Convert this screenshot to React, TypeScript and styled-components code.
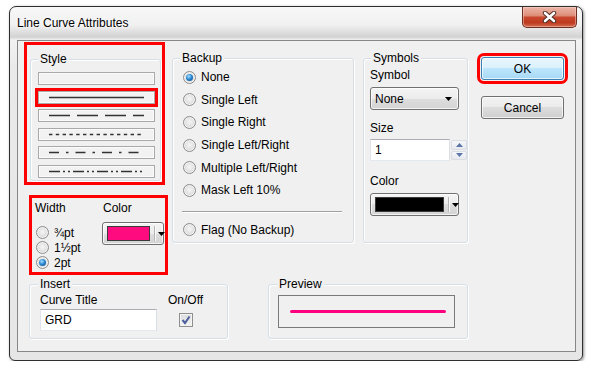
import React from 'react';
import styled, { createGlobalStyle, css } from 'styled-components';

const Global = createGlobalStyle`
  html, body { margin: 0; padding: 0; background: #ffffff; }
  body { font-family: "Liberation Sans", Arial, sans-serif; font-size: 12px; color: #000; }
  * { box-sizing: border-box; }
`;

const FONT = `"Liberation Sans", Arial, sans-serif`;
const MARK = '#ff0000';

const Window = styled.div`
  margin: 6px 0 0 9px;
  width: 574px;
  height: 355px;
  border: 1px solid #2e2e2e;
  border-radius: 7px 7px 6px 6px;
  padding: 0 6px 8px 7px;
  display: flex;
  flex-direction: column;
  background: linear-gradient(180deg, #f8f8f8 0px, #f0f0f0 18px, #dadada 27px, #d2d2d2 30px, #f2f2f2 33px, #e9e9e9 60px, #e6e6e6 100%);
  box-shadow: 1px 1px 3px rgba(0, 0, 0, 0.45);
`;

const TitleBar = styled.div`
  height: 33px;
  flex: none;
  display: flex;
  justify-content: space-between;
  align-items: flex-start;
`;

const Title = styled.div`
  padding-top: 9px;
  line-height: 14px;
  font-size: 12px;
  color: #000;
  text-shadow: 0 0 6px #fff, 0 0 3px #fff;
`;

const CloseButton = styled.div`
  width: 55px;
  height: 21px;
  margin-right: -1px;
  display: flex;
  align-items: center;
  justify-content: center;
  border: 1px solid #6b2f22;
  border-top: none;
  border-radius: 0 0 5px 5px;
  background: linear-gradient(180deg, #ecb6a8 0%, #de8f7a 42%, #c9482d 52%, #bd3a1f 78%, #d46c50 100%);
  box-shadow: inset 0 0 0 1px rgba(255, 220, 210, 0.45);
`;

const Client = styled.div`
  flex: 1;
  border: 1px solid #878787;
  background: #f0f0f0;
  display: flex;
  flex-direction: column;
`;

const TopRow = styled.div`
  display: flex;
  align-items: flex-start;
`;

const LeftCol = styled.div`
  margin-left: 6px;
  width: 144px;
  display: flex;
  flex-direction: column;
  align-items: flex-start;
`;

const StyleMark = styled.div`
  margin-top: 1px;
  width: 141px;
  height: 143px;
  border: 3px solid ${MARK};
  padding: 14px 0 0 3px;
`;

const GroupBox = styled.div<{ $w: number; $h: number }>`
  width: ${p => p.$w}px;
  height: ${p => p.$h}px;
  border: 1px solid #d5dfe5;
  border-radius: 3px;
  box-shadow: inset 1px 1px 0 #ffffff, 1px 1px 0 #ffffff;
  flex: none;
`;

const GroupTitle = styled.div<{ $x?: number }>`
  width: fit-content;
  margin: -8px 0 0 ${p => p.$x ?? 7}px;
  padding: 0 2px;
  line-height: 14px;
  height: 14px;
  background: #f0f0f0;
`;

const StyleList = styled.div`
  padding: 6px 0 0 7px;
  display: flex;
  flex-direction: column;
  gap: 5.6px;
`;

const StyleRow = styled.div<{ $marked?: boolean }>`
  width: 117px;
  height: 13px;
  border: 1px solid #a9a9a9;
  background: #f2f2f2;
  box-shadow: inset 0 0 0 1px #fbfbfb;
  display: flex;
  ${p => p.$marked && css`
    outline: 3px solid ${MARK};
    outline-offset: 0;
  `}
`;

const WidthMark = styled.div`
  margin: 10px 0 0 5px;
  width: 139px;
  height: 80px;
  border: 3px solid ${MARK};
  padding: 3px 0 0 3px;
  display: flex;
`;

const WidthCol = styled.div`
  width: 67px;
  display: flex;
  flex-direction: column;
`;

const ColorCol = styled.div`
  display: flex;
  flex-direction: column;
`;

const Label = styled.div<{ $x?: number }>`
  line-height: 14px;
  height: 14px;
  margin-left: ${p => p.$x ?? 0}px;
  white-space: nowrap;
`;

const SmallRadioList = styled.div`
  margin: 10px 0 0 1px;
  display: flex;
  flex-direction: column;
`;

const RadioRow = styled.div<{ $h: number }>`
  height: ${p => p.$h}px;
  display: flex;
  align-items: center;
  gap: 5px;
  white-space: nowrap;
`;

const RadioDot = styled.span<{ $checked?: boolean }>`
  flex: none;
  width: 13px;
  height: 13px;
  border-radius: 50%;
  border: 1px solid #8d8d8d;
  background: radial-gradient(circle at 50% 45%, #f6f6f6 0%, #e4e4e4 45%, #c9c9c9 100%);
  box-shadow: inset 0 0 0 1px #f3f3f3;
  display: flex;
  align-items: center;
  justify-content: center;
  ${p => p.$checked && css`
    &::after {
      content: '';
      width: 7px;
      height: 7px;
      border-radius: 50%;
      background: radial-gradient(circle at 40% 35%, #a8e0ff 0%, #2d8ad4 45%, #0b3f7e 100%);
    }
  `}
`;

const BackupBox = styled(GroupBox)`
  margin: 17px 0 0 4px;
`;

const BackupList = styled.div`
  padding: 1px 0 0 10px;
  display: flex;
  flex-direction: column;
`;

const Separator = styled.div`
  margin: 9px 0 6px -1px;
  width: 160px;
  height: 2px;
  border-top: 1px solid #a0a0a0;
  border-bottom: 1px solid #ffffff;
`;

const SymbolsBox = styled(GroupBox)`
  margin: 17px 0 0 9px;
`;

const SymbolsBody = styled.div`
  padding: 3px 0 0 6px;
  display: flex;
  flex-direction: column;
`;

const Combo = styled.div<{ $w: number; $mt: number }>`
  margin-top: ${p => p.$mt}px;
  width: ${p => p.$w}px;
  height: ${p => p.$mt >= 0 ? 23 : 23}px;
  border: 1px solid #707070;
  border-radius: 3px;
  background: linear-gradient(180deg, #f4f4f4 0%, #ececec 50%, #dedede 50%, #d3d3d3 100%);
  box-shadow: inset 0 0 0 1px rgba(255, 255, 255, 0.75);
  display: flex;
  align-items: center;
  padding: 0 6px 0 4px;
`;

const ComboText = styled.span`
  flex: 1;
  line-height: 14px;
`;

const Swatch = styled.span<{ $color: string; $w: number }>`
  width: ${p => p.$w}px;
  height: 15px;
  background: ${p => p.$color};
  border: 1px solid #3a3a3a;
  flex: none;
`;

const ComboSep = styled.span`
  width: 1px;
  height: 15px;
  margin: 0 3px 0 4px;
  background: #b5b5b5;
  box-shadow: 1px 0 0 #fafafa;
  flex: none;
`;

const Arrow = () => (
  <svg width="7" height="4" viewBox="0 0 7 4" style={{ flex: 'none' }}>
    <path d="M0 0H7L3.5 4Z" fill="#000" />
  </svg>
);

const SpinRow = styled.div`
  margin-top: 4px;
  display: flex;
  height: 22px;
`;

const TextBox = styled.div<{ $w: number }>`
  width: ${p => p.$w}px;
  height: 22px;
  background: #ffffff;
  border: 1px solid #e3e9ef;
  border-top-color: #abadb3;
  border-left-color: #e2e3ea;
  border-right-color: #dbdfe6;
  padding-left: 4px;
  display: flex;
  align-items: center;
  line-height: 14px;
`;

const SpinButtons = styled.div`
  width: 17px;
  display: flex;
  flex-direction: column;
  gap: 1px;
  padding: 1px 0 1px 1px;
`;

const SpinButton = styled.div`
  flex: 1;
  border: 1px solid #d9dde4;
  border-radius: 2px;
  background: linear-gradient(180deg, #f6f7f9, #e6e9ee);
  display: flex;
  align-items: center;
  justify-content: center;
`;

const Buttons = styled.div`
  margin: 16px 0 0 13px;
  display: flex;
  flex-direction: column;
  gap: 16px;
`;

const Button = styled.button<{ $default?: boolean }>`
  width: 83px;
  height: 23px;
  padding: 0;
  font: 12px ${FONT};
  color: #000;
  border-radius: 3px;
  border: 1px solid ${p => (p.$default ? '#3c7fb1' : '#707070')};
  background: ${p =>
    p.$default
      ? 'linear-gradient(180deg, #eaf6fd 0%, #d9f0fc 50%, #bee6fd 50%, #a7d9f5 100%)'
      : 'linear-gradient(180deg, #f2f2f2 0%, #ebebeb 50%, #dddddd 50%, #cfcfcf 100%)'};
  box-shadow: inset 0 0 0 1px rgba(255, 255, 255, 0.7);
  ${p => p.$default && css`
    outline: 3px solid ${MARK};
    outline-offset: 1px;
  `}
`;

const BottomRow = styled.div`
  margin-top: 9px;
  display: flex;
  align-items: flex-start;
`;

const InsertBox = styled(GroupBox)`
  margin-left: 11px;
`;

const InsertBody = styled.div`
  padding: 2px 0 0 10px;
  display: flex;
  gap: 11px;
`;

const TitleCol = styled.div`
  display: flex;
  flex-direction: column;
  gap: 2px;
`;

const OnOffCol = styled.div`
  display: flex;
  flex-direction: column;
  align-items: center;
  gap: 6px;
`;

const CheckBox = styled.div`
  width: 14px;
  height: 14px;
  border: 1px solid #8f8f8f;
  background: linear-gradient(180deg, #dcdcdc, #f4f4f4);
  box-shadow: inset 0 0 0 1px #f4f4f4;
  display: flex;
  align-items: center;
  justify-content: center;
`;

const PreviewBox = styled(GroupBox)`
  margin-left: 40px;
`;

const PreviewBody = styled.div`
  padding: 4px 0 0 9px;
`;

const PreviewFrame = styled.div`
  width: 177px;
  height: 33px;
  border: 1px solid #7a7a7a;
  background: #f0f0f0;
  display: flex;
  align-items: center;
  padding-left: 11px;
`;

const LineStyle = ({ dash, show = true }: { dash?: string; show?: boolean }) => (
  <svg width="115" height="11" viewBox="0 0 115 11">
    {show && (
      <line x1="10" y1="5.5" x2="105" y2="5.5" stroke="#333" strokeWidth="1.6" strokeDasharray={dash} />
    )}
  </svg>
);

const backupOptions = [
  { label: 'None', checked: true },
  { label: 'Single Left' },
  { label: 'Single Right' },
  { label: 'Single Left/Right' },
  { label: 'Multiple Left/Right' },
  { label: 'Mask Left 10%' },
];

const widths = [
  { label: '¾pt' },
  { label: '1½pt' },
  { label: '2pt', checked: true },
];

export default function App() {
  return (
    <>
      <Global />
      <Window>
        <TitleBar>
          <Title>Line Curve Attributes</Title>
          <CloseButton>
            <svg width="15" height="12" viewBox="0 0 15 12">
              <path d="M3 2L12 10M12 2L3 10" stroke="#4a2a24" strokeWidth="4.4" strokeLinecap="round" />
              <path d="M3 2L12 10M12 2L3 10" stroke="#ffffff" strokeWidth="2.6" strokeLinecap="round" />
            </svg>
          </CloseButton>
        </TitleBar>
        <Client>
          <TopRow>
            <LeftCol>
              <StyleMark>
                <GroupBox $w={131} $h={122}>
                  <GroupTitle>Style</GroupTitle>
                  <StyleList>
                    <StyleRow><LineStyle show={false} /></StyleRow>
                    <StyleRow $marked><LineStyle /></StyleRow>
                    <StyleRow><LineStyle dash="21 7" /></StyleRow>
                    <StyleRow><LineStyle dash="3.4 3.4" /></StyleRow>
                    <StyleRow><LineStyle dash="10 7 2.5 7" /></StyleRow>
                    <StyleRow><LineStyle dash="11 3 2 3 2 3" /></StyleRow>
                  </StyleList>
                </GroupBox>
              </StyleMark>
              <WidthMark>
                <WidthCol>
                  <Label>Width</Label>
                  <SmallRadioList>
                    {widths.map(w => (
                      <RadioRow key={w.label} $h={15}>
                        <RadioDot $checked={w.checked} />
                        {w.label}
                      </RadioRow>
                    ))}
                  </SmallRadioList>
                </WidthCol>
                <ColorCol>
                  <Label $x={1}>Color</Label>
                  <Combo $w={62} $mt={7}>
                    <Swatch $color="#ff0b80" $w={43} />
                    <ComboSep />
                    <Arrow />
                  </Combo>
                </ColorCol>
              </WidthMark>
            </LeftCol>

            <BackupBox $w={182} $h={185}>
              <GroupTitle>Backup</GroupTitle>
              <BackupList>
                {backupOptions.map(o => (
                  <RadioRow key={o.label} $h={22.6}>
                    <RadioDot $checked={o.checked} />
                    {o.label}
                  </RadioRow>
                ))}
                <Separator />
                <RadioRow $h={22}>
                  <RadioDot />
                  Flag (No Backup)
                </RadioRow>
              </BackupList>
            </BackupBox>

            <SymbolsBox $w={105} $h={185}>
              <GroupTitle>Symbols</GroupTitle>
              <SymbolsBody>
                <Label>Symbol</Label>
                <Combo $w={89} $mt={5}>
                  <ComboText>None</ComboText>
                  <Arrow />
                </Combo>
                <Label style={{ marginTop: 11 }}>Size</Label>
                <SpinRow>
                  <TextBox $w={81}>1</TextBox>
                  <SpinButtons>
                    <SpinButton>
                      <svg width="7" height="4" viewBox="0 0 7 4"><path d="M0 4H7L3.5 0Z" fill="#5a76a8" /></svg>
                    </SpinButton>
                    <SpinButton>
                      <svg width="7" height="4" viewBox="0 0 7 4"><path d="M0 0H7L3.5 4Z" fill="#5a76a8" /></svg>
                    </SpinButton>
                  </SpinButtons>
                </SpinRow>
                <Label style={{ marginTop: 13 }}>Color</Label>
                <Combo $w={89} $mt={5}>
                  <Swatch $color="#000000" $w={69} />
                  <ComboSep />
                  <Arrow />
                </Combo>
              </SymbolsBody>
            </SymbolsBox>

            <Buttons>
              <Button $default>OK</Button>
              <Button>Cancel</Button>
            </Buttons>
          </TopRow>

          <BottomRow>
            <InsertBox $w={199} $h={55}>
              <GroupTitle $x={8}>Insert</GroupTitle>
              <InsertBody>
                <TitleCol>
                  <Label>Curve Title</Label>
                  <TextBox $w={117}>GRD</TextBox>
                </TitleCol>
                <OnOffCol>
                  <Label>On/Off</Label>
                  <CheckBox>
                    <svg width="10" height="10" viewBox="0 0 10 10">
                      <path d="M1.5 5L4 8L8.5 1.5" fill="none" stroke="#4b5f9c" strokeWidth="2" />
                    </svg>
                  </CheckBox>
                </OnOffCol>
              </InsertBody>
            </InsertBox>
            <PreviewBox $w={200} $h={55}>
              <GroupTitle $x={8}>Preview</GroupTitle>
              <PreviewBody>
                <PreviewFrame>
                  <svg width="156" height="5" viewBox="0 0 156 5">
                    <line x1="1.5" y1="2.5" x2="154.5" y2="2.5" stroke="#ff0080" strokeWidth="3" strokeLinecap="round" />
                  </svg>
                </PreviewFrame>
              </PreviewBody>
            </PreviewBox>
          </BottomRow>
        </Client>
      </Window>
    </>
  );
}
